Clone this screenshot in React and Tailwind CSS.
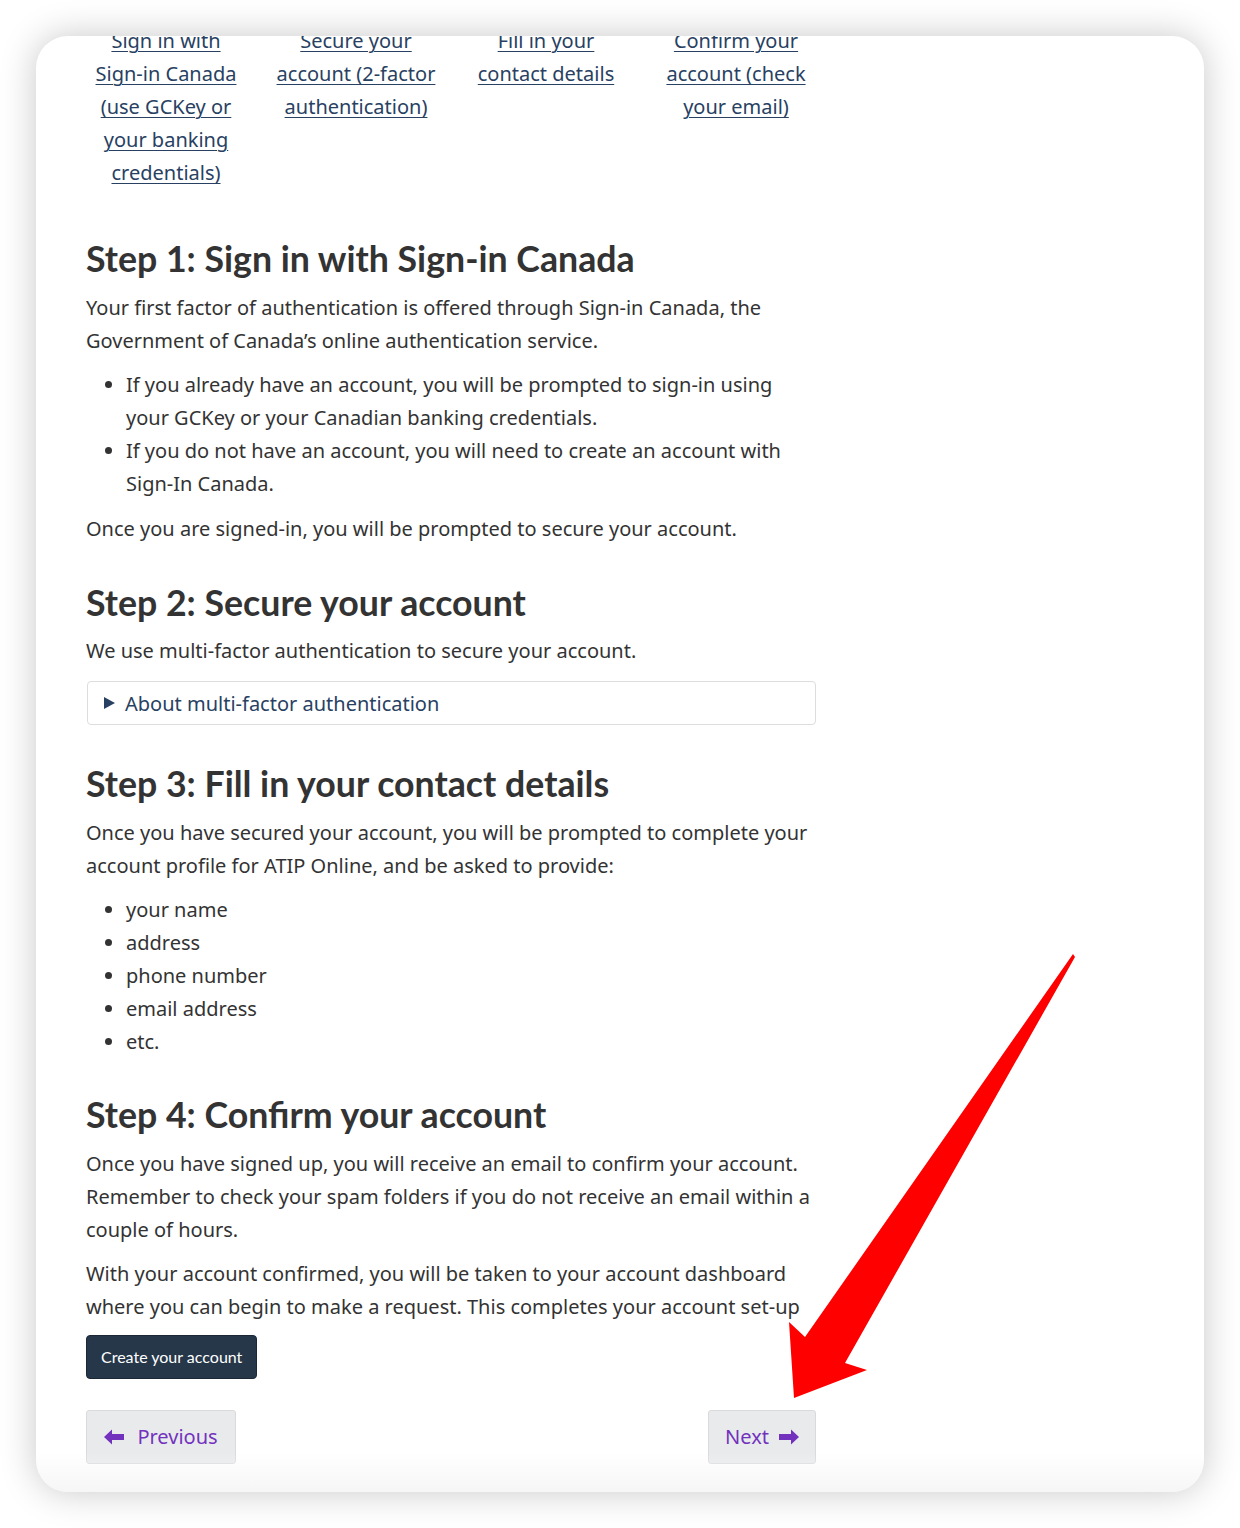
import React from "react";

const body = { fontFamily: '"Noto Sans", "Open Sans", sans-serif' };
const head = { fontFamily: 'Lato, "Noto Sans", sans-serif' };

function H2({ children, className = "" }) {
  return (
    <h2
      className={"text-[35.7px] leading-[40px] font-bold text-[#333333] mb-[11.5px] " + className}
      style={head}
    >
      {children}
    </h2>
  );
}

function P({ children, className = "" }) {
  return <p className={"mb-[11.5px] " + className}>{children}</p>;
}

function Ul({ items }) {
  return (
    <ul className="list-disc pl-[40px] mb-[11.5px]">
      {items.map((t, i) => (
        <li key={i}>{t}</li>
      ))}
    </ul>
  );
}

const steps = [
  "Sign in with Sign-in Canada (use GCKey or your banking credentials)",
  "Secure your account (2-factor authentication)",
  "Fill in your contact details",
  "Confirm your account (check your email)",
];

export default function App() {
  return (
    <div className="bg-white w-[1240px] h-[1528px] p-[36px]">
      <div className="relative w-[1168px] h-[1456px] bg-white rounded-[32px] overflow-hidden shadow-[0_0_36px_rgba(0,0,0,0.22)]">
        <div
          className="pl-[50px] -mt-[12px] w-[780px] text-[20px] leading-[33px] text-[#333333]"
          style={body}
        >
          <ul className="grid grid-cols-[190px_190px_190px_190px] -ml-[15px]">
            {steps.map((s, i) => (
              <li key={i} className="px-[15px] text-center">
                <a href="#" className="text-[#284162] underline underline-offset-[3px] decoration-1">
                  {s}
                </a>
              </li>
            ))}
          </ul>

          <H2 className="mt-[50px]">Step 1: Sign in with Sign-in Canada</H2>
          <P>
            Your first factor of authentication is offered through Sign-in Canada, the Government of
            Canada’s online authentication service.
          </P>
          <Ul
            items={[
              "If you already have an account, you will be prompted to sign-in using your GCKey or your Canadian banking credentials.",
              "If you do not have an account, you will need to create an account with Sign-In Canada.",
            ]}
          />
          <P>Once you are signed-in, you will be prompted to secure your account.</P>

          <H2 className="mt-[38px]">Step 2: Secure your account</H2>
          <P>We use multi-factor authentication to secure your account.</P>
          <div className="mt-[14px] mb-[39px] w-[729px] ml-[1px] h-[44px] border border-[#dddddd] rounded-[4px] flex items-center pl-[16px] text-[#284162]">
            <svg width="11" height="12" viewBox="0 0 11 12" className="mr-[10px]" fill="#284162">
              <path d="M0 0 L11 6 L0 12 Z" />
            </svg>
            <span>About multi-factor authentication</span>
          </div>

          <H2 className="mt-[38px]">Step 3: Fill in your contact details</H2>
          <P>
            Once you have secured your account, you will be prompted to complete your account profile
            for ATIP Online, and be asked to provide:
          </P>
          <Ul items={["your name", "address", "phone number", "email address", "etc."]} />

          <H2 className="mt-[37px]">Step 4: Confirm your account</H2>
          <P>
            Once you have signed up, you will receive an email to confirm your account. Remember to
            check your spam folders if you do not receive an email within a couple of hours.
          </P>
          <P>
            With your account confirmed, you will be taken to your account dashboard where you can
            begin to make a request. This completes your account set-up
          </P>

          <button
            className="h-[44px] px-[14px] bg-[#26374a] border border-[#1b2735] rounded-[4px] text-white text-[16px]"
            style={head}
          >
            Create your account
          </button>

          <div className="mt-[31px] w-[730px] flex justify-between">
            <button className="h-[54px] w-[150px] flex items-center justify-center gap-[13px] bg-[#e9eaec] border border-[#d9dadc] rounded-[3px] text-[#7232bd]">
              <svg width="20" height="16" viewBox="0 0 20 16" fill="#7232bd">
                <path d="M0 8 L8 0.5 L8 5 L20 5 L20 11 L8 11 L8 15.5 Z" />
              </svg>
              <span>Previous</span>
            </button>
            <button className="h-[54px] w-[108px] flex items-center justify-center gap-[10px] bg-[#e9eaec] border border-[#d9dadc] rounded-[3px] text-[#7232bd]">
              <span>Next</span>
              <svg width="20" height="16" viewBox="0 0 20 16" fill="#7232bd">
                <path d="M20 8 L12 0.5 L12 5 L0 5 L0 11 L12 11 L12 15.5 Z" />
              </svg>
            </button>
          </div>
        </div>

        <div className="absolute left-0 right-0 bottom-0 h-[40px] bg-gradient-to-b from-transparent to-[#f6f6f6] pointer-events-none" />

        <svg
          className="absolute left-0 top-0 pointer-events-none"
          width="1168"
          height="1456"
          viewBox="36 36 1168 1456"
        >
          <polygon
            points="1073,954 1075,957 845,1363 867,1370 794,1398 789,1322 805,1337"
            fill="#ff0000"
          />
        </svg>
      </div>
    </div>
  );
}
